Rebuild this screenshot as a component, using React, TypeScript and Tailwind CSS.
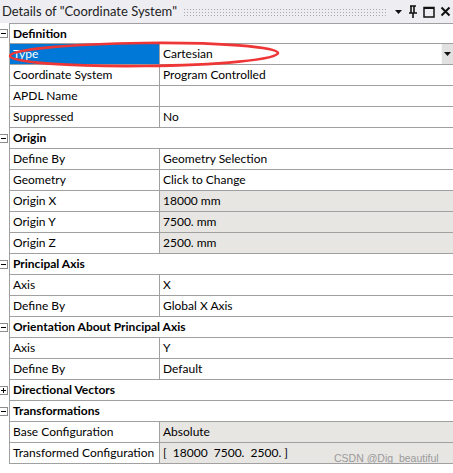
type Row =
  | { kind: 'group'; label: string; open: boolean }
  | { kind: 'prop'; label: string; value: string; gray?: boolean; selected?: boolean; dropdown?: boolean };

const rows: Row[] = [
  { kind: 'group', label: 'Definition', open: true },
  { kind: 'prop', label: 'Type', value: 'Cartesian', selected: true, dropdown: true },
  { kind: 'prop', label: 'Coordinate System', value: 'Program Controlled' },
  { kind: 'prop', label: 'APDL Name', value: '' },
  { kind: 'prop', label: 'Suppressed', value: 'No' },
  { kind: 'group', label: 'Origin', open: true },
  { kind: 'prop', label: 'Define By', value: 'Geometry Selection' },
  { kind: 'prop', label: 'Geometry', value: 'Click to Change' },
  { kind: 'prop', label: 'Origin X', value: '18000 mm', gray: true },
  { kind: 'prop', label: 'Origin Y', value: '7500. mm', gray: true },
  { kind: 'prop', label: 'Origin Z', value: '2500. mm', gray: true },
  { kind: 'group', label: 'Principal Axis', open: true },
  { kind: 'prop', label: 'Axis', value: 'X' },
  { kind: 'prop', label: 'Define By', value: 'Global X Axis' },
  { kind: 'group', label: 'Orientation About Principal Axis', open: true },
  { kind: 'prop', label: 'Axis', value: 'Y' },
  { kind: 'prop', label: 'Define By', value: 'Default' },
  { kind: 'group', label: 'Directional Vectors', open: false },
  { kind: 'group', label: 'Transformations', open: true },
  { kind: 'prop', label: 'Base Configuration', value: 'Absolute', gray: true },
  { kind: 'prop', label: 'Transformed Configuration', value: '[  18000  7500.  2500. ]', gray: true },
];

function Expander({ open }: { open: boolean }) {
  return (
    <div className="relative ml-[-1px] h-[9px] w-[9px] border border-[#8c8c8c] bg-white">
      <div className="absolute left-[1px] top-[3px] h-px w-[5px] bg-black" />
      {!open && <div className="absolute left-[3px] top-[1px] h-[5px] w-px bg-black" />}
    </div>
  );
}

export default function App() {
  return (
    <div
      className="relative h-[473px] w-[453px] overflow-hidden bg-white text-[12px] text-black"
      style={{ fontFamily: 'Lato, "Noto Sans", sans-serif' }}
    >
      {/* title bar */}
      <div className="flex h-[23px] items-center bg-[#eeeef2] pl-[2px] pr-[2px]">
        <span className="whitespace-nowrap text-[13px] text-[#222]">Details of "Coordinate System"</span>
        <div className="ml-[6px] h-[8px] flex-1 bg-[radial-gradient(circle,#a8a8a8_0.7px,transparent_0.9px)] bg-[length:3px_3px]" />
        <div className="ml-[6px] flex items-center gap-[5px]">
          <svg width="9" height="9" viewBox="0 0 9 9">
            <path d="M1 3h7L4.5 7z" fill="#111" />
          </svg>
          <svg width="10" height="13" viewBox="0 0 10 13">
            <path d="M3 1v7M6 1v7M2 1h6M1 8h8M5 8v5" stroke="#111" strokeWidth="1.6" fill="none" />
          </svg>
          <svg width="12" height="12" viewBox="0 0 12 12">
            <rect x="1" y="1.5" width="10" height="9.5" stroke="#111" strokeWidth="1.5" fill="none" />
            <path d="M1 2h10" stroke="#111" strokeWidth="2" />
          </svg>
          <svg width="11" height="11" viewBox="0 0 11 11">
            <path d="M1.5 1.5l8 8M9.5 1.5l-8 8" stroke="#111" strokeWidth="2" />
          </svg>
        </div>
      </div>

      {/* property grid */}
      <div className="flex flex-col">
        {rows.map((r, i) => (
          <div key={i} className="flex h-[21px]">
            <div className="flex w-[9px] shrink-0 items-center">
              {r.kind === 'group' && <Expander open={r.open} />}
            </div>
            <div
              className={`flex flex-1 border-b border-l border-[#a0a0a0] ${i === 0 ? 'border-t' : ''}`}
            >
              {r.kind === 'group' ? (
                <div className="flex flex-1 items-center pl-[3px] font-bold">{r.label}</div>
              ) : (
                <>
                  <div
                    className={`flex w-[149px] shrink-0 items-center whitespace-nowrap pl-[3px] ${
                      r.selected ? 'bg-[#0078d7] text-white' : ''
                    }`}
                  >
                    {r.label}
                  </div>
                  <div
                    className={`flex flex-1 items-center border-l border-[#a0a0a0] pl-[3px] whitespace-pre ${
                      r.gray ? 'bg-[#e8e6e3]' : ''
                    }`}
                  >
                    <span className="flex-1">{r.value}</span>
                    {r.dropdown && (
                      <div className="flex h-full w-[12px] items-center justify-center border-l border-[#f8f8f8] bg-[#e1e1e1]">
                        <svg width="7" height="5" viewBox="0 0 7 5">
                          <path d="M0 0h7L3.5 4z" fill="#111" />
                        </svg>
                      </div>
                    )}
                  </div>
                </>
              )}
            </div>
          </div>
        ))}
      </div>

      {/* red annotation ellipse */}
      <svg className="pointer-events-none absolute left-0 top-0" width="453" height="80">
        <ellipse cx="144" cy="54.5" rx="134" ry="11.5" fill="none" stroke="#ee3636" strokeWidth="2.6" transform="rotate(-0.6 144 54.5)" />
      </svg>

      {/* watermark */}
      <div
        className="absolute left-[334px] top-[451px] whitespace-nowrap text-[10.5px] text-[#9a9a9a]"
        style={{ fontFamily: '"Liberation Sans", sans-serif' }}
      >
        CSDN @Dig_beautiful
      </div>
    </div>
  );
}
